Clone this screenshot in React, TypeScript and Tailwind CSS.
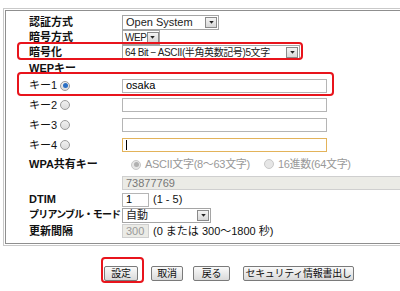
import React from "react";

const font = { fontFamily: '"Liberation Sans", "Noto Sans CJK JP", sans-serif' };

function Arrow() {
  return (
    <span className="ml-auto mr-[1px] flex h-[11px] w-[12px] shrink-0 items-center justify-center border border-[#8a8a8a] bg-gradient-to-b from-[#f4f4f4] to-[#d8d8d8]">
      <svg width="5" height="3" viewBox="0 0 6 4"><path d="M0 0h6L3 3.5z" fill="#222" /></svg>
    </span>
  );
}

function Select({ w, text, small }: { w: string; text: string; small?: boolean }) {
  return (
    <div className={`flex h-[15px] items-center border border-[#a5a5a5] bg-white leading-none text-[#222] ${small ? "pl-[2px] text-[10px] tracking-[-0.4px]" : "pl-[3px] text-[11px]"} ${w}`}>
      <span className="whitespace-nowrap">{text}</span>
      <Arrow />
    </div>
  );
}

function Radio({ on, dim }: { on?: boolean; dim?: boolean }) {
  return (
    <span className={`inline-flex h-[10px] w-[10px] shrink-0 items-center justify-center rounded-full border ${dim ? "border-[#c8c8c8] bg-[#e6e6e6]" : "border-[#9a9a9a] bg-gradient-to-b from-[#f0f0f0] to-[#dcdcdc]"}`}>
      {on && <span className={`h-[5px] w-[5px] rounded-full ${dim ? "bg-[#b0b0b0]" : "bg-[#2a6fc4]"}`} />}
    </span>
  );
}

function Label({ children, bold = true, tight }: { children: React.ReactNode; bold?: boolean; tight?: boolean }) {
  return (
    <div className={`flex w-[93px] shrink-0 items-center gap-[3px] whitespace-nowrap leading-none text-[#111] ${tight ? "text-[10px] tracking-[-0.8px]" : "text-[11px]"} ${bold ? "font-bold" : ""}`}>
      {children}
    </div>
  );
}

function Btn({ children, w }: { children: React.ReactNode; w: string }) {
  return (
    <div className={`flex h-[15px] items-center justify-center rounded-[2px] border border-[#7a7a7a] bg-gradient-to-b from-[#fafafa] to-[#dadada] text-[10px] leading-none tracking-[-0.3px] text-[#111] ${w}`}>
      {children}
    </div>
  );
}

export default function App() {
  return (
    <div className="relative h-[291px] w-[400px] overflow-hidden bg-white" style={font}>
      <div className="ml-[3px] mt-[8px] w-[420px] border-l border-t border-b border-[#c9c9c9] pl-[1px] pt-[1px] pb-[1px]">
        <div className="border-l border-t border-b border-[#8f8f8f] pl-[23px] pt-[4px] pb-[4px]">
          <div className="flex h-[15px] items-center">
            <Label>認証方式</Label>
            <Select w="w-[97px]" text="Open System" />
          </div>
          <div className="flex h-[15px] items-center">
            <Label>暗号方式</Label>
            <Select w="w-[38px]" text="WEP" small />
          </div>
          <div className="flex h-[15px] items-center">
            <Label>暗号化</Label>
            <Select w="w-[178px]" text="64 Bit − ASCII(半角英数記号)5文字" small />
          </div>
          <div className="flex h-[16px] items-center">
            <Label>WEPキー</Label>
          </div>
          <div className="flex h-[19px] items-center">
            <Label bold={false}>キー1 <Radio on /></Label>
            <div className="flex h-[14px] w-[205px] items-center border border-[#b5b5b5] bg-white pl-[3px] text-[11px] leading-none">osaka</div>
          </div>
          {["キー2", "キー3"].map((k) => (
            <div key={k} className="flex h-[20px] items-center">
              <Label bold={false}>{k} <Radio /></Label>
              <div className="h-[14px] w-[205px] border border-[#b5b5b5] bg-white" />
            </div>
          ))}
          <div className="flex h-[20px] items-center">
            <Label bold={false}>キー4 <Radio /></Label>
            <div className="flex h-[14px] w-[205px] items-center border border-[#e3b35a] bg-white pl-[3px]">
              <span className="h-[10px] w-px bg-black" />
            </div>
          </div>
          <div className="flex h-[19px] items-center">
            <Label>WPA共有キー</Label>
            <div className="flex items-center gap-[4px] pl-[9px] text-[11px] leading-none tracking-[-0.3px] text-[#999]">
              <Radio on dim />
              <span>ASCII文字(8〜63文字)</span>
              <span className="ml-[10px]"><Radio dim /></span>
              <span>16進数(64文字)</span>
            </div>
          </div>
          <div className="flex h-[18px] items-center">
            <Label>{""}</Label>
            <div className="flex h-[14px] w-[300px] items-center border border-[#cfcfcf] bg-[#ebebe6] pl-[3px] text-[11px] leading-none text-[#777]">73877769</div>
          </div>
          <div className="flex h-[15px] items-center">
            <Label>DTIM</Label>
            <div className="flex h-[14px] w-[27px] items-center border border-[#b5b5b5] bg-white pl-[3px] text-[11px] leading-none">1</div>
            <span className="ml-[4px] text-[11px] leading-none text-[#111]">(1 - 5)</span>
          </div>
          <div className="flex h-[16px] items-center">
            <Label tight>プリアンブル・モード</Label>
            <Select w="w-[89px]" text="自動" />
          </div>
          <div className="flex h-[16px] items-center">
            <Label>更新間隔</Label>
            <div className="flex h-[14px] w-[27px] items-center border border-[#cfcfcf] bg-[#ebebe6] pl-[3px] text-[11px] leading-none text-[#999]">300</div>
            <span className="ml-[4px] whitespace-nowrap text-[11px] leading-none text-[#111]">(0 または 300〜1800 秒)</span>
          </div>
        </div>
      </div>

      <div className="ml-[104px] mt-[20px] flex items-center">
        <Btn w="w-[34px]">設定</Btn>
        <div className="ml-[13px]"><Btn w="w-[32px]">取消</Btn></div>
        <div className="ml-[10px]"><Btn w="w-[37px]">戻る</Btn></div>
        <div className="ml-[13px]"><Btn w="w-[111px]">セキュリティ情報書出し</Btn></div>
      </div>

      <div className="absolute left-[17px] top-[42px] h-[18px] w-[286px] rounded-[4px] border-2 border-[#e8141c]" />
      <div className="absolute left-[17px] top-[72px] h-[24px] w-[317px] rounded-[4px] border-2 border-[#e8141c]" />
      <div className="absolute left-[101px] top-[257px] h-[26px] w-[43px] rounded-[4px] border-2 border-[#e8141c]" />
    </div>
  );
}
